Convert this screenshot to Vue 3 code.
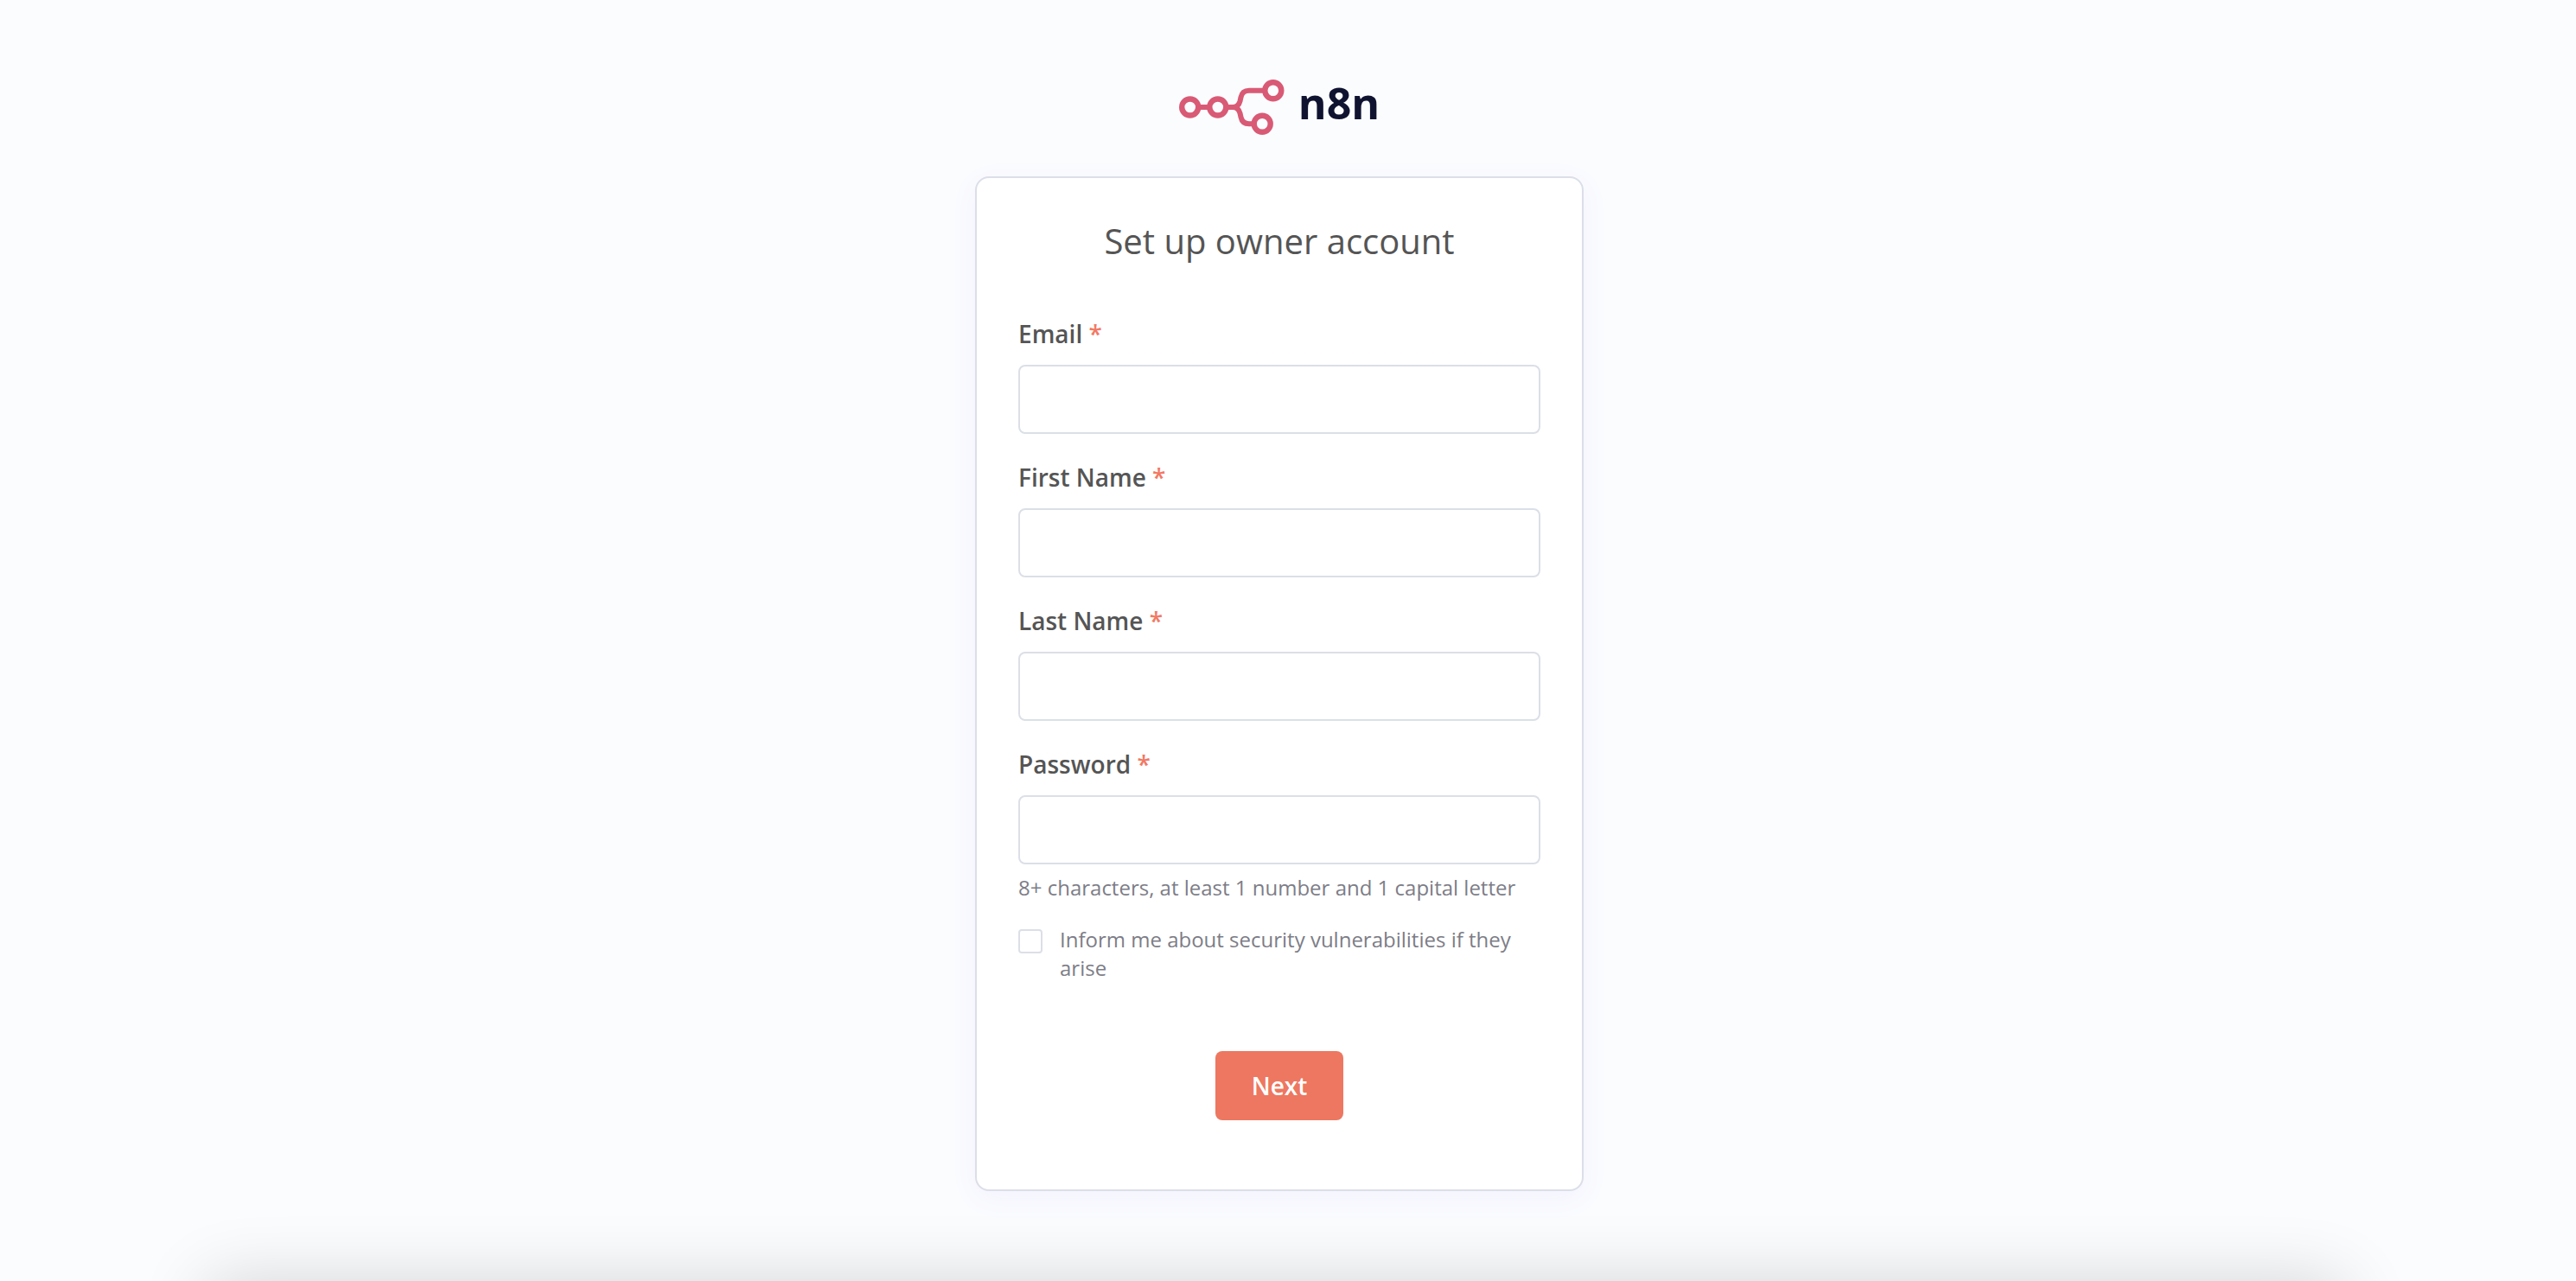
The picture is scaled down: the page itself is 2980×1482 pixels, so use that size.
<script setup>
import { reactive } from 'vue'

const fields = [
  { name: 'email', label: 'Email', type: 'email', autocomplete: 'email' },
  { name: 'firstName', label: 'First Name', type: 'text', autocomplete: 'given-name' },
  { name: 'lastName', label: 'Last Name', type: 'text', autocomplete: 'family-name' },
  {
    name: 'password',
    label: 'Password',
    type: 'password',
    autocomplete: 'new-password',
    hint: '8+ characters, at least 1 number and 1 capital letter',
  },
]

const values = reactive({ email: '', firstName: '', lastName: '', password: '', agree: false })
</script>

<template>
  <main class="page">
    <div class="logo">
      <svg class="mark" viewBox="0 0 122 64" fill="none" stroke="#d95a75" stroke-width="6" aria-hidden="true">
        <circle cx="12.7" cy="32" r="9.5" stroke-width="6.4" />
        <circle cx="44.8" cy="32" r="9.5" stroke-width="6.4" />
        <circle cx="108.8" cy="12.7" r="9.5" stroke-width="6.4" />
        <circle cx="96.2" cy="51.2" r="9.5" stroke-width="6.4" />
        <path d="M23 32H34M55 32H62C67 32 69.5 29 70.5 25L71.5 20.5C72.5 15.5 76 12.7 81 12.7H99" />
        <path d="M62 32C67 32 69.5 35 70.5 39L71.5 43.5C72.5 48.5 76 51.2 81 51.2H86" />
      </svg>
      <span class="wordmark">n8n</span>
    </div>

    <form class="card" @submit.prevent>
      <h1 class="title">Set up owner account</h1>

      <div class="fields">
        <div v-for="field in fields" :key="field.name" class="field">
          <label class="label" :for="field.name">{{ field.label }} <span class="required">*</span></label>
          <input
            :id="field.name"
            v-model="values[field.name]"
            class="input"
            :type="field.type"
            :name="field.name"
            :autocomplete="field.autocomplete"
            required
          />
          <p v-if="field.hint" class="hint">{{ field.hint }}</p>
        </div>
      </div>

      <label class="agree" for="agree">
        <input id="agree" v-model="values.agree" class="checkbox" type="checkbox" name="agree" />
        <span>Inform me about security vulnerabilities if they arise</span>
      </label>

      <button class="submit" type="submit">Next</button>
    </form>

    <div class="drawer-shadow" aria-hidden="true"></div>
  </main>
</template>

<style>
body {
  margin: 0;
  background: #fbfcfe;
}
</style>

<style scoped>
.page {
  position: relative;
  box-sizing: border-box;
  min-height: 100vh;
  padding: 92px 20px 104px 0;
  overflow: hidden;
  display: flex;
  flex-direction: column;
  align-items: center;
  background: #fbfcfe;
  color: #555;
  font-family: 'Open Sans', 'Noto Sans', sans-serif;
}

.logo {
  display: flex;
  align-items: flex-start;
  gap: 16px;
  height: 64px;
  margin-bottom: 48px;
}

.mark {
  width: 122px;
  height: 64px;
}

.wordmark {
  color: #101330;
  font-size: 50px;
  font-weight: 700;
  line-height: 54px;
}

.card {
  position: relative;
  z-index: 1;
  box-sizing: border-box;
  width: 704px;
  max-width: 100%;
  padding: 48px 48px 80px;
  display: flex;
  flex-direction: column;
  border: 2px solid #dcdee8;
  border-radius: 16px;
  background: #fff;
  box-shadow: 0 8px 32px rgba(99, 77, 255, 0.06);
}

.title {
  margin: 0 0 64px;
  font-size: 40px;
  font-weight: 400;
  line-height: 50px;
  text-align: center;
}

.fields {
  display: flex;
  flex-direction: column;
  gap: 32px;
}

.field {
  display: flex;
  flex-direction: column;
}

.label {
  margin-bottom: 18px;
  font-size: 28px;
  font-weight: 600;
  line-height: 36px;
}

.required {
  color: #f27964;
}

.input {
  box-sizing: border-box;
  width: 100%;
  height: 80px;
  padding: 0 24px;
  border: 2px solid #dbdfe7;
  border-radius: 8px;
  background: #fff;
  color: #555;
  font: inherit;
  font-size: 28px;
}

.hint {
  margin: 10px 0 0;
  color: #7d7d87;
  font-size: 24px;
  line-height: 34px;
}

.agree {
  display: flex;
  align-items: flex-start;
  gap: 20px;
  margin-top: 26px;
  color: #7d7d87;
  font-size: 24px;
  line-height: 33px;
}

.checkbox {
  flex: none;
  box-sizing: border-box;
  width: 28px;
  height: 28px;
  margin: 5px 0 0;
  appearance: none;
  border: 2px solid #dbdfe7;
  border-radius: 4px;
  background: #fff;
}

.checkbox:checked {
  border-color: #ed7760;
  background: #ed7760;
}

.submit {
  align-self: center;
  height: 80px;
  margin-top: 80px;
  padding: 0 42px;
  border: 0;
  border-radius: 8px;
  background: #ed7760;
  color: #fff;
  font: inherit;
  font-size: 28px;
  font-weight: 600;
}

/* Shadow cast upwards by the panel resting just below the fold */
.drawer-shadow {
  position: absolute;
  top: 100%;
  left: 8%;
  right: 9%;
  height: 200px;
  border-radius: 16px;
  box-shadow: 0 0 80px rgba(0, 0, 0, 0.16);
}
</style>
